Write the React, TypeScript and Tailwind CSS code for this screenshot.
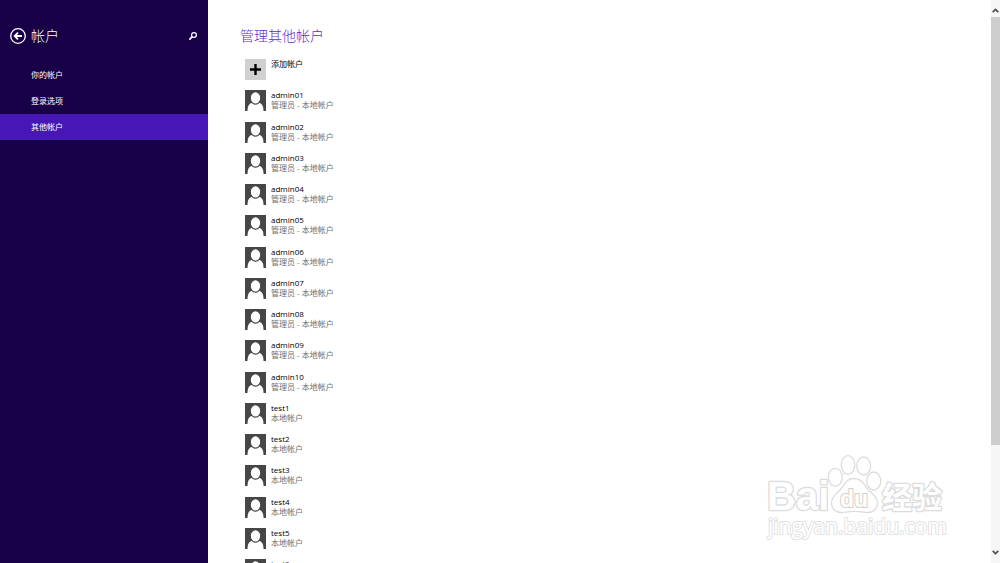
import React, { useState } from 'react';

interface Account {
  name: string;
  role: string;
}

const NAV_ITEMS = ['你的帐户', '登录选项', '其他帐户'];

const ADMINS: Account[] = ['01', '02', '03', '04', '05', '06', '07', '08', '09', '10'].map(n => ({
  name: `admin${n}`,
  role: '管理员 - 本地帐户',
}));

const USERS: Account[] = [1, 2, 3, 4, 5, 6].map(n => ({
  name: `test${n}`,
  role: '本地帐户',
}));

const ACCOUNTS = [...ADMINS, ...USERS];

const BackIcon = () => (
  <svg viewBox="0 0 16 16" className="w-4 h-4" fill="none" stroke="currentColor">
    <circle cx="8" cy="8" r="7.3" strokeWidth="1.3" />
    <path d="M12 8H4.8M8 4.7L4.7 8 8 11.3" strokeWidth="1.8" />
  </svg>
);

const SearchIcon = () => (
  <svg viewBox="0 0 8 8" className="w-2 h-2" fill="none" stroke="currentColor">
    <circle cx="5" cy="3" r="2.4" strokeWidth="1.2" />
    <path d="M3.3 4.7L0.3 7.7" strokeWidth="1.7" />
  </svg>
);

const PersonIcon = () => (
  <svg viewBox="0 0 21 21" className="w-[21px] h-[21px] shrink-0">
    <rect width="21" height="21" fill="#464646" />
    <path d="M2.5 21c0-5.2 1.6-7.8 5-8.6h6c3.4.8 5 3.400 5 8.600z" fill="#fff" />
    <ellipse cx="10.5" cy="7.900" rx="5.300" ry="6.200" fill="#fff" stroke="#464646" strokeWidth="1.2" />
  </svg>
);

const PlusIcon = () => (
  <svg viewBox="0 0 21 21" className="w-[21px] h-[21px] shrink-0">
    <rect width="21" height="21" fill="#d0d0d0" />
    <path d="M10.5 5v11M5 10.5h11" stroke="#000" strokeWidth="2.4" />
  </svg>
);

const Chevron = ({ down = false }: { down?: boolean }) => (
  <svg viewBox="0 0 7 5" className={down ? 'w-[7px] h-[5px] rotate-180' : 'w-[7px] h-[5px]'} fill="none" stroke="#505050" strokeWidth="1.7">
    <path d="M0.7 4.2L3.5 1.4l2.8 2.8" />
  </svg>
);

const Watermark = () => (
  <svg
    viewBox="0 0 184 90"
    className="absolute right-[50px] bottom-5 w-[184px] h-[90px] pointer-events-none"
    fill="#fff"
    stroke="#dcdcdc"
    strokeWidth="1.3"
    strokeLinejoin="round"
  >
    <g fontFamily="'Liberation Sans', 'Noto Sans CJK SC', sans-serif" fontWeight="700" strokeWidth="2.6" paintOrder="stroke">
      <text x="1" y="57" fontSize="40">Bai</text>
      <text x="116" y="55" fontSize="30">经验</text>
    </g>
    <ellipse cx="69.3" cy="24.3" rx="7" ry="9" />
    <ellipse cx="82" cy="12" rx="6.8" ry="9.3" />
    <ellipse cx="97.7" cy="13" rx="7" ry="9" />
    <ellipse cx="107.7" cy="28" rx="7" ry="9" />
    <path d="M88 25.5c8 0 10 6 14 11 4 4.5 9.5 7 9.5 13.5 0 6-4.5 9.5-10 9.5-5 0-8-1.2-13-1.2s-8 1.2-13 1.2c-5.5 0-10-3.5-10-9.5 0-6.5 5-9 9-13.5 4-5 6-11 13.5-11z" />
    <g paintOrder="stroke" strokeWidth="2">
      <text x="74" y="54" fontSize="23" fontFamily="'Liberation Sans', sans-serif" fontWeight="700" stroke="#d0d0d0">du</text>
      <text x="2" y="81" fontSize="21" fontFamily="'Open Sans', sans-serif" stroke="#e2e2e2">jingyan.baidu.com</text>
    </g>
  </svg>
);

const App: React.FC = () => {
  const [active, setActive] = useState('其他帐户');

  return (
    <div className="relative flex h-screen overflow-hidden bg-white font-['Open_Sans','Noto_Sans_CJK_SC',sans-serif]">
      <aside className="w-52 shrink-0 bg-[#180048] text-white">
        <header className="mt-[26px] mb-4 flex h-5 items-center pl-[10px] pr-[11px]">
          <button type="button" aria-label="返回"><BackIcon /></button>
          <h2 className="ml-[5px] flex-1 text-[14px] leading-5 font-light">帐户</h2>
          <button type="button" aria-label="搜索"><SearchIcon /></button>
        </header>
        <nav>
          {NAV_ITEMS.map(item => (
            <a
              key={item}
              href="#"
              onClick={() => setActive(item)}
              className={`block h-[26px] pl-[31px] text-[8px] leading-[26px] ${item === active ? 'bg-[#4617b4]' : ''}`}
            >
              {item}
            </a>
          ))}
        </nav>
      </aside>

      <main className="flex-1 overflow-hidden pl-8 pt-[26px]">
        <h1 className="text-[14px] leading-5 font-light text-[#5a2bc8]">管理其他帐户</h1>
        <div className="mt-[13px] flex h-[521px] flex-col justify-between pl-[5px]">
          <button type="button" className="flex gap-[5px] text-left text-[8px] leading-[10px] text-black">
            <PlusIcon />
            <span>添加帐户</span>
          </button>
          {ACCOUNTS.map(account => (
            <button key={account.name} type="button" className="flex gap-[5px] text-left text-[8px] leading-[10px]">
              <PersonIcon />
              <span className="flex flex-col">
                <span className="text-black">{account.name}</span>
                <span className="text-[#707070]">{account.role}</span>
              </span>
            </button>
          ))}
        </div>
      </main>

      <div className="flex w-[9px] shrink-0 flex-col items-center bg-[#f6f6f6]">
        <div className="flex h-[17px] items-center pt-1"><Chevron /></div>
        <div className="min-h-0 w-full flex-[428] bg-[#cdcdcd]" />
        <div className="min-h-0 flex-[101]" />
        <div className="flex h-[17px] items-center pb-1"><Chevron down /></div>
      </div>

      <Watermark />
    </div>
  );
};

export default App;
